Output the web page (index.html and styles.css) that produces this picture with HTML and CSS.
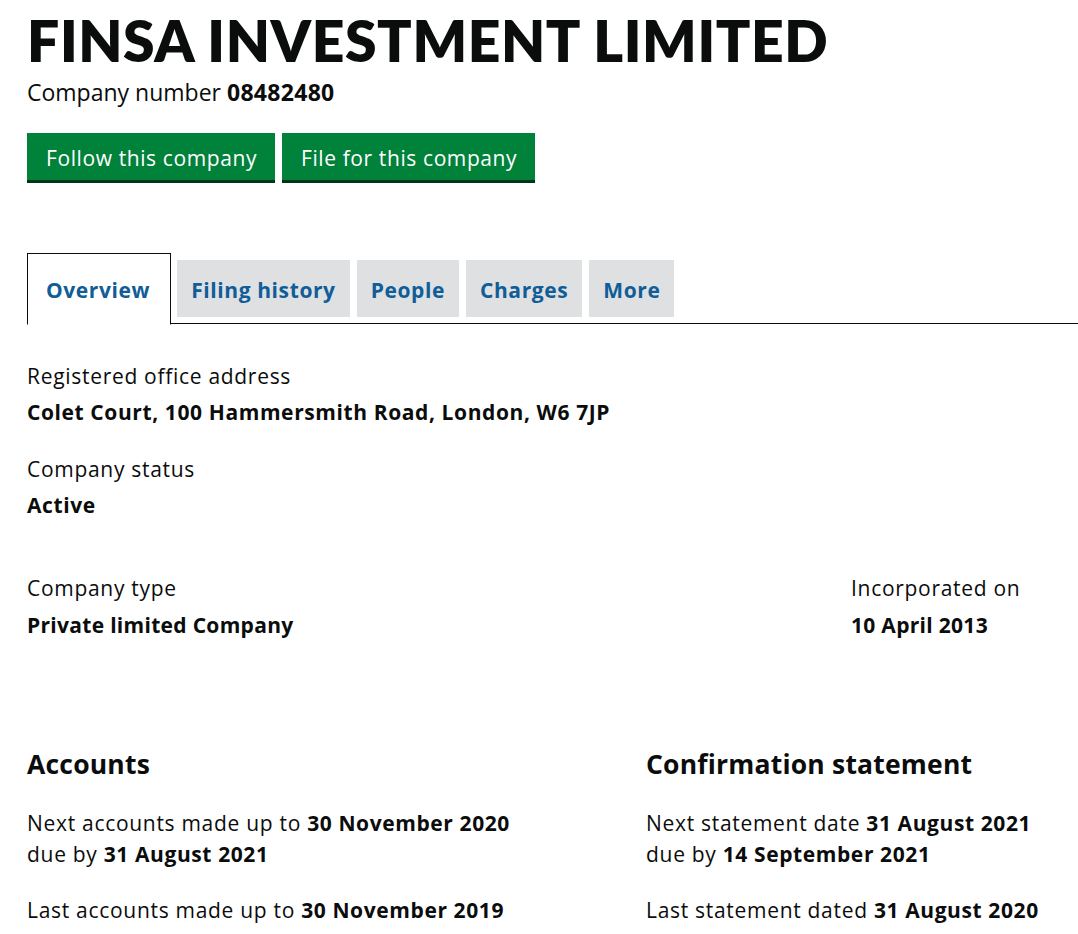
FILE: index.html
```html
<!DOCTYPE html>
<html lang="en">
<head>
  <meta charset="UTF-8" />
  <title>FINSA INVESTMENT LIMITED - Overview</title>
  <link rel="stylesheet" href="styles.css">
</head>
<body>
  <div class="page">
    <h1 class="heading">FINSA INVESTMENT LIMITED</h1>
    <p class="company-number">Company number <strong>08482480</strong></p>

    <div class="actions">
      <a class="button" href="#">Follow this company</a>
      <a class="button" href="#">File for this company</a>
    </div>

    <ul class="tabs">
      <li class="tab active"><a href="#">Overview</a></li>
      <li class="tab"><a href="#">Filing history</a></li>
      <li class="tab"><a href="#">People</a></li>
      <li class="tab"><a href="#">Charges</a></li>
      <li class="tab"><a href="#">More</a></li>
    </ul>

    <dl class="field">
      <dt>Registered office address</dt>
      <dd>Colet Court, 100 Hammersmith Road, London, W6 7JP</dd>
    </dl>

    <dl class="field">
      <dt>Company status</dt>
      <dd>Active</dd>
    </dl>

    <div class="row-split">
      <dl class="field">
        <dt>Company type</dt>
        <dd>Private limited Company</dd>
      </dl>
      <dl class="field incorporated">
        <dt>Incorporated on</dt>
        <dd>10 April 2013</dd>
      </dl>
    </div>

    <div class="columns">
      <div class="col">
        <h2>Accounts</h2>
        <p>Next accounts made up to <strong>30 November 2020</strong><br>
          due by <strong>31 August 2021</strong></p>
        <p>Last accounts made up to <strong>30 November 2019</strong></p>
      </div>
      <div class="col">
        <h2>Confirmation statement</h2>
        <p>Next statement date <strong>31 August 2021</strong><br>
          due by <strong>14 September 2021</strong></p>
        <p>Last statement dated <strong>31 August 2020</strong></p>
      </div>
    </div>
  </div>
</body>
</html>
```

FILE: styles.css
```css
body {
  margin: 0;
  font-family: "Open Sans", "Liberation Sans", Arial, sans-serif;
  color: #0b0c0c;
  background: #fff;
  font-size: 21px;
  letter-spacing: 0.7px;
}
strong, dd, .tab a, h2 {
  letter-spacing: 0.6px;
}
.page {
  padding: 6px 0 0 27px;
}
.heading {
  font-family: Lato, "Open Sans", sans-serif;
  font-size: 57px;
  font-weight: 800;
  margin: 0;
  line-height: 68px;
  letter-spacing: 0.6px;
}
.company-number {
  margin: 5px 0 0;
  line-height: 26px;
  font-size: 23px;
  letter-spacing: 0;
}
.company-number strong {
  letter-spacing: 0.3px;
}
.actions {
  display: flex;
  gap: 7px;
  margin-top: 28px;
}
.button {
  display: block;
  background: #00823b;
  color: #fff;
  text-decoration: none;
  padding: 0 18px 0 19px;
  height: 47px;
  line-height: 50px;
  border-bottom: 3px solid #003618;
  letter-spacing: 0.6px;
}
.tabs {
  list-style: none;
  margin: 70px 0 0;
  padding: 0;
  display: flex;
  align-items: flex-start;
  border-bottom: 1px solid #0b0c0c;
  height: 70px;
}
.tab {
  background: #dee0e2;
  margin: 7px 7px 0 0;
  height: 57px;
}
.tab a {
  display: block;
  padding: 0 14px;
  line-height: 60px;
  color: #105d98;
  font-weight: 700;
  text-decoration: none;
}
.tab.active {
  background: #fff;
  margin: 0 6px -1px 0;
  height: 70px;
  border: 1px solid #0b0c0c;
  border-bottom: 1px solid #fff;
}
.tab.active a {
  padding: 0 20px 0 18px;
  line-height: 72px;
}
.field {
  margin: 0;
}
.field dt {
  line-height: 26px;
  margin-top: 39px;
}
.field dd {
  margin: 10px 0 0;
  font-weight: 700;
  line-height: 26px;
}
.field + .field dt {
  margin-top: 31px;
}
.row-split {
  display: flex;
  justify-content: space-between;
  margin-top: 32px;
}
.row-split .field dt {
  margin-top: 25px;
}
.row-split .field dd {
  margin-top: 11px;
  letter-spacing: 0.3px;
}
.incorporated {
  width: 227px;
}
.columns {
  display: grid;
  grid-template-columns: 619px 1fr;
  margin-top: 109px;
}
.col h2 {
  font-size: 26.5px;
  font-weight: 700;
  margin: 0;
  line-height: 34px;
  letter-spacing: 0.2px;
}
.col p {
  margin: 27px 0 0;
  line-height: 31px;
}
.col p + p {
  margin-top: 25px;
}
```
